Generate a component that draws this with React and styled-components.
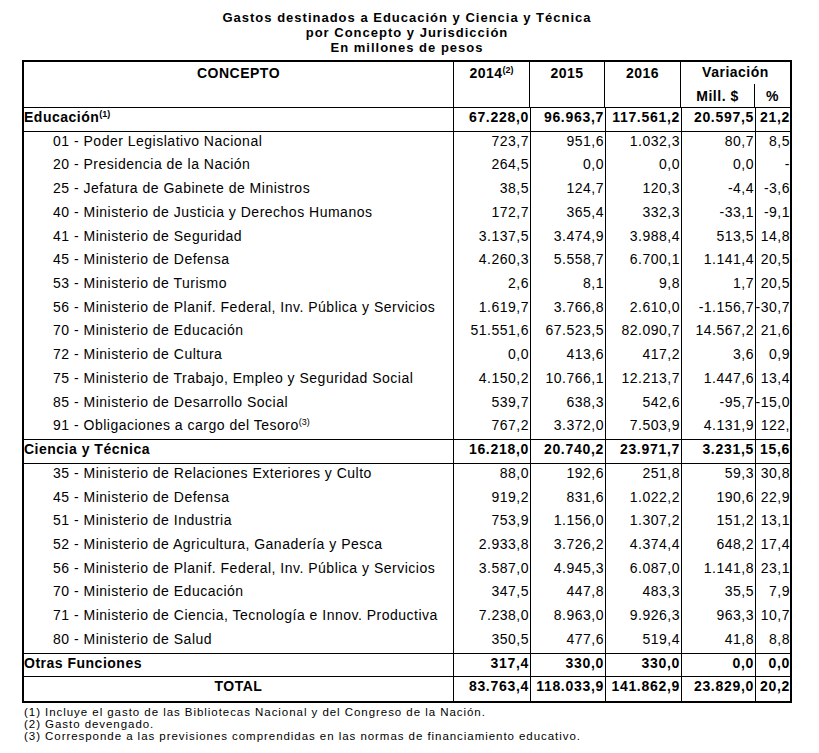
import React from "react";
import styled, { createGlobalStyle } from "styled-components";

const GlobalStyle = createGlobalStyle`
    body {
        margin: 0;
        background: #fff;
        color: #000;
        font-family: "Liberation Sans", Arial, sans-serif;
    }
`;

const educacion = [
    ["01 - Poder Legislativo Nacional", "723,7", "951,6", "1.032,3", "80,7", "8,5"],
    ["20 - Presidencia de la Nación", "264,5", "0,0", "0,0", "0,0", "-"],
    ["25 - Jefatura de Gabinete de Ministros", "38,5", "124,7", "120,3", "-4,4", "-3,6"],
    ["40 - Ministerio de Justicia y Derechos Humanos", "172,7", "365,4", "332,3", "-33,1", "-9,1"],
    ["41 - Ministerio de Seguridad", "3.137,5", "3.474,9", "3.988,4", "513,5", "14,8"],
    ["45 - Ministerio de Defensa", "4.260,3", "5.558,7", "6.700,1", "1.141,4", "20,5"],
    ["53 - Ministerio de Turismo", "2,6", "8,1", "9,8", "1,7", "20,5"],
    ["56 - Ministerio de Planif. Federal, Inv. Pública y Servicios", "1.619,7", "3.766,8", "2.610,0", "-1.156,7", "-30,7"],
    ["70 - Ministerio de Educación", "51.551,6", "67.523,5", "82.090,7", "14.567,2", "21,6"],
    ["72 - Ministerio de Cultura", "0,0", "413,6", "417,2", "3,6", "0,9"],
    ["75 - Ministerio de Trabajo, Empleo y Seguridad Social", "4.150,2", "10.766,1", "12.213,7", "1.447,6", "13,4"],
    ["85 - Ministerio de Desarrollo Social", "539,7", "638,3", "542,6", "-95,7", "-15,0"],
    ["91 - Obligaciones a cargo del Tesoro", "767,2", "3.372,0", "7.503,9", "4.131,9", "122,", "(3)"],
];

const ciencia = [
    ["35 - Ministerio de Relaciones Exteriores y Culto", "88,0", "192,6", "251,8", "59,3", "30,8"],
    ["45 - Ministerio de Defensa", "919,2", "831,6", "1.022,2", "190,6", "22,9"],
    ["51 - Ministerio de Industria", "753,9", "1.156,0", "1.307,2", "151,2", "13,1"],
    ["52 - Ministerio de Agricultura, Ganadería y Pesca", "2.933,8", "3.726,2", "4.374,4", "648,2", "17,4"],
    ["56 - Ministerio de Planif. Federal, Inv. Pública y Servicios", "3.587,0", "4.945,3", "6.087,0", "1.141,8", "23,1"],
    ["70 - Ministerio de Educación", "347,5", "447,8", "483,3", "35,5", "7,9"],
    ["71 - Ministerio de Ciencia, Tecnología e Innov. Productiva", "7.238,0", "8.963,0", "9.926,3", "963,3", "10,7"],
    ["80 - Ministerio de Salud", "350,5", "477,6", "519,4", "41,8", "8,8"],
];

const rows = [
    { kind: "group", cells: ["Educación", "67.228,0", "96.963,7", "117.561,2", "20.597,5", "21,2", "(1)"], rule: true },
    ...educacion.map((cells, i) => ({ kind: "item", cells, rule: i === educacion.length - 1 })),
    { kind: "group", cells: ["Ciencia y Técnica", "16.218,0", "20.740,2", "23.971,7", "3.231,5", "15,6"], rule: true },
    ...ciencia.map((cells, i) => ({ kind: "item", cells, rule: i === ciencia.length - 1 })),
    { kind: "group", cells: ["Otras Funciones", "317,4", "330,0", "330,0", "0,0", "0,0"], rule: true },
    { kind: "total", cells: ["TOTAL", "83.763,4", "118.033,9", "141.862,9", "23.829,0", "20,2"] },
];

function App() {
    return (
        <>
            <GlobalStyle />
            <Page>
                <Title>
                    Gastos destinados a Educación y Ciencia y Técnica
                    <br />
                    por Concepto y Jurisdicción
                    <br />
                    En millones de pesos
                </Title>

                <Grid>
                    <HeadCell $rows={2} $rule>
                        CONCEPTO
                    </HeadCell>
                    <HeadCell $rows={2} $rule>
                        2014<Sup>(2)</Sup>
                    </HeadCell>
                    <HeadCell $rows={2} $rule>
                        2015
                    </HeadCell>
                    <HeadCell $rows={2} $rule>
                        2016
                    </HeadCell>
                    <HeadCell $cols={2} $last>
                        Variación
                    </HeadCell>
                    <HeadCell $rule>Mill. $</HeadCell>
                    <HeadCell $rule $last>
                        %
                    </HeadCell>

                    {rows.map((row, r) => {
                        const [label, ...rest] = row.cells;
                        const values = rest.slice(0, 5);
                        const note = rest[5];
                        const bold = row.kind !== "item";
                        return (
                            <React.Fragment key={r}>
                                <Label $kind={row.kind} $rule={row.rule}>
                                    {label}
                                    {note && <Sup $light={!bold}>{note}</Sup>}
                                </Label>
                                {values.map((v, c) => (
                                    <Num key={c} $bold={bold} $rule={row.rule} $last={c === 4}>
                                        {v}
                                    </Num>
                                ))}
                            </React.Fragment>
                        );
                    })}
                </Grid>

                <Notes>
                    <p>(1) Incluye el gasto de las Bibliotecas Nacional y del Congreso de la Nación.</p>
                    <p>(2) Gasto devengado.</p>
                    <p>(3) Corresponde a las previsiones comprendidas en las normas de financiamiento educativo.</p>
                </Notes>
            </Page>
        </>
    );
}

const Page = styled.div`
    width: 770px;
    padding: 10px 0 0 22px;
`;

const Title = styled.h1`
    margin: 0 0 5px;
    font-size: 13px;
    line-height: 15px;
    letter-spacing: 1px;
    font-weight: 700;
    text-align: center;
`;

const Grid = styled.div`
    display: grid;
    grid-template-columns: 430px 76px 75px 76px 74px 35px;
    grid-template-rows: 22px 24px;
    grid-auto-rows: 23.72px;
    border: 2px solid #000;
    font-size: 14px;
    line-height: 16px;
    letter-spacing: 0.5px;
`;

const Cell = styled.div`
    box-sizing: border-box;
    white-space: nowrap;
    overflow: hidden;
    border-right: ${(p) => (p.$last ? "none" : "1px solid #000")};
    border-bottom: ${(p) => (p.$rule ? "1px solid #000" : "none")};
`;

const HeadCell = styled(Cell)`
    grid-row: span ${(p) => p.$rows || 1};
    grid-column: span ${(p) => p.$cols || 1};
    font-weight: 700;
    text-align: center;
    padding-top: ${(p) => (p.$rows === 2 ? "3px" : p.$cols ? "2px" : "4px")};
`;

const Label = styled(Cell)`
    padding-top: 1px;
    font-weight: ${(p) => (p.$kind === "item" ? 400 : 700)};
    text-align: ${(p) => (p.$kind === "total" ? "center" : "left")};
    padding-left: ${(p) => (p.$kind === "item" ? "29px" : "0")};
`;

const Num = styled(Cell)`
    padding-top: 1px;
    padding-right: 0.5px;
    font-weight: ${(p) => (p.$bold ? 700 : 400)};
    text-align: right;
    letter-spacing: ${(p) => (p.$bold ? "0.7px" : "0.5px")};
    margin-right: -0.5px;
`;

const Sup = styled.sup`
    font-size: 9px;
    line-height: 0;
    letter-spacing: 0;
    vertical-align: 5px;
    font-weight: ${(p) => (p.$light ? 400 : 700)};
`;

const Notes = styled.div`
    margin-top: 3px;
    padding-left: 2px;
    font-size: 11.5px;
    line-height: 12px;
    letter-spacing: 0.95px;
    p {
        margin: 0;
    }
`;

export default App;
